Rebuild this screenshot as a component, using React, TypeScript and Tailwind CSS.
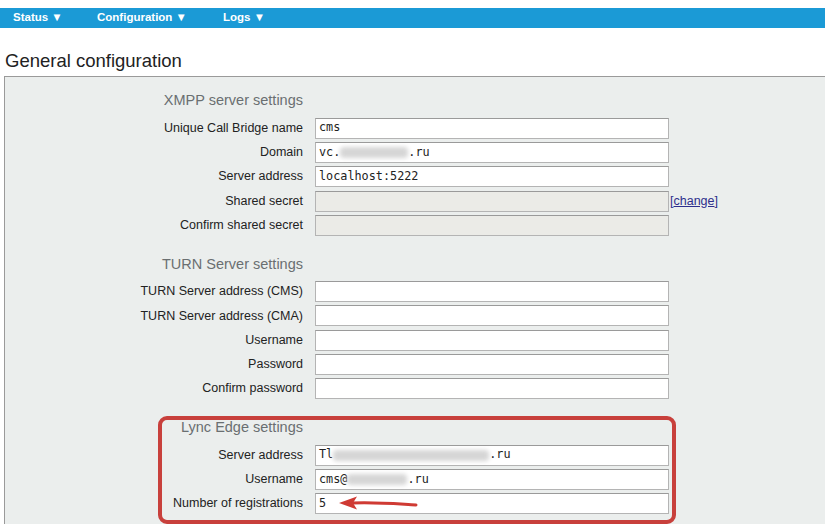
import React from 'react';

const sans = { fontFamily: '"Liberation Sans", Arial, sans-serif' };
const mono = { fontFamily: '"DejaVu Sans Mono", "Liberation Mono", monospace' };

function Blur({ w }: { w: number }) {
  return (
    <span
      className="inline-block h-[11px] align-middle bg-[#d6d6d6] blur-[2px] rounded-sm"
      style={{ width: w }}
    />
  );
}

function Field({
  label,
  value,
  disabled,
  extra,
}: {
  label: string;
  value?: React.ReactNode;
  disabled?: boolean;
  extra?: React.ReactNode;
}) {
  return (
    <div className="flex h-[24.3px] items-center">
      <div className="w-[298px] text-right text-[12.5px] text-[#222]">{label}</div>
      <div
        className={`ml-[12px] flex h-[21px] w-[354px] items-center border border-[#b4b4b4] border-t-[#9a9a9a] px-[3px] text-[11.8px] text-[#222] ${
          disabled ? 'bg-[#ebebe7]' : 'bg-white'
        }`}
        style={mono}
      >
        {value}
      </div>
      {extra}
    </div>
  );
}

function Section({ title }: { title: string }) {
  return (
    <div className="flex h-[30px] items-center">
      <div className="w-[298px] text-right text-[14.5px] text-[#6a6f71]">{title}</div>
    </div>
  );
}

export default function App() {
  return (
    <div className="min-h-[524px] w-[825px] overflow-hidden bg-white" style={sans}>
      <div className="h-[8px]" />
      <nav className="flex h-[20px] items-center bg-[#1b9ad6] text-[11.5px] font-bold text-white">
        <span className="ml-[13px] w-[50px]">Status ▼</span>
        <span className="ml-[34px] w-[96px]">Configuration ▼</span>
        <span className="ml-[30px]">Logs ▼</span>
      </nav>
      <h1 className="ml-[5px] mt-[21px] text-[18.5px] leading-[23px] text-[#222]">General configuration</h1>
      <div className="ml-[4px] mt-[4px] h-[460px] border-l border-t border-[#9a9a9a] bg-[#ebeeed] pt-[9px]">
        <Section title="XMPP server settings" />
        <Field label="Unique Call Bridge name" value="cms" />
        <Field
          label="Domain"
          value={
            <>
              vc.<Blur w={68} />.ru
            </>
          }
        />
        <Field label="Server address" value="localhost:5222" />
        <Field
          label="Shared secret"
          disabled
          extra={
            <span className="ml-[1px] text-[12.5px] text-[#2e2e8c]">
              [<span className="underline">change</span>]
            </span>
          }
        />
        <Field label="Confirm shared secret" disabled />

        <div className="h-[12px]" />
        <Section title="TURN Server settings" />
        <Field label="TURN Server address (CMS)" />
        <Field label="TURN Server address (CMA)" />
        <Field label="Username" />
        <Field label="Password" />
        <Field label="Confirm password" />

        <div className="h-[12px]" />
        <div className="relative">
          <Section title="Lync Edge settings" />
          <Field
            label="Server address"
            value={
              <>
                Tl<Blur w={156} />.ru
              </>
            }
          />
          <Field
            label="Username"
            value={
              <>
                cms@<Blur w={60} />.ru
              </>
            }
          />
          <Field label="Number of registrations" value="5" />
          <div className="pointer-events-none absolute left-[153px] top-[3px] h-[108px] w-[518px] rounded-[9px] border-[4px] border-[#c8403c]" />
          <svg
            className="pointer-events-none absolute left-[333px] top-[82px]"
            width="84"
            height="16"
            viewBox="0 0 84 16"
          >
            <path d="M14 8 C 40 7, 60 9, 78 10" stroke="#cf3a33" strokeWidth="3" fill="none" strokeLinecap="round" />
            <path d="M1 8 L 19 1.5 L 15 8 L 19 14.5 Z" fill="#cf3a33" />
          </svg>
        </div>
      </div>
    </div>
  );
}
